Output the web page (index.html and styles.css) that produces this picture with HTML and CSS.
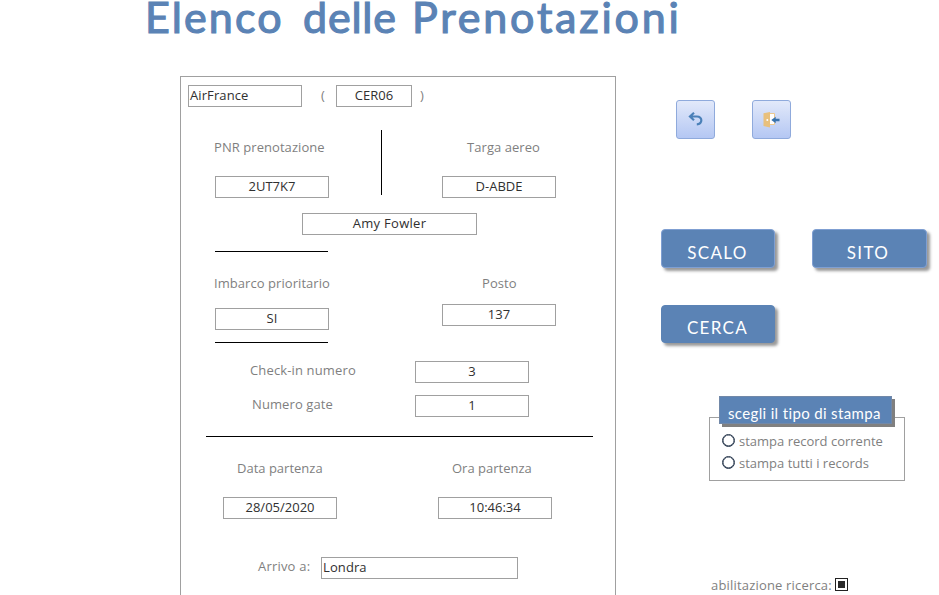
FILE: index.html
```html
<!DOCTYPE html>
<html lang="it">
<head>
<meta charset="utf-8">
<title>Elenco delle Prenotazioni</title>
<link rel="stylesheet" href="styles.css">
</head>
<body>
<h1 class="title"><span class="w1">Elenco</span> <span class="w2">delle</span> <span class="w3">Prenotazioni</span></h1>
<div class="layout">
<main class="card">
  <div class="row airline">
    <div class="field left">AirFrance</div><span class="paren">(</span><div class="field code">CER06</div><span class="paren close">)</span>
  </div>
  <div class="row booking">
    <div class="col pnr"><span class="label">PNR prenotazione</span><div class="field">2UT7K7</div></div>
    <div class="divider"></div>
    <div class="col plane"><span class="label">Targa aereo</span><div class="field">D-ABDE</div></div>
  </div>
  <div class="field passenger">Amy Fowler</div>
  <div class="row boarding">
    <div class="col priority"><span class="label">Imbarco prioritario</span><div class="field">SI</div></div>
    <div class="col seat"><span class="label">Posto</span><div class="field">137</div></div>
  </div>
  <div class="row checkin"><span class="label">Check-in numero</span><div class="field">3</div></div>
  <div class="row gate"><span class="label">Numero gate</span><div class="field">1</div></div>
  <div class="rule"></div>
  <div class="row departure">
    <div class="col date"><span class="label">Data partenza</span><div class="field">28/05/2020</div></div>
    <div class="col time"><span class="label">Ora partenza</span><div class="field">10:46:34</div></div>
  </div>
  <div class="row arrival"><span class="label">Arrivo a:</span><div class="field left">Londra</div></div>
</main>
<aside class="side">
  <div class="tools">
    <button class="tool" aria-label="Annulla"><svg width="16" height="16" viewBox="0 0 16 16"><path d="M6 .8 2 4.500 6 8.200M2.500 4.500h6.500c5.800 0 5.800 7.500-.2 7.800" fill="none" stroke="#4a80b8" stroke-width="2.2"/></svg></button>
    <button class="tool" aria-label="Esci"><svg width="18" height="16" viewBox="0 0 18 16"><path d="M6 1.500h5.500v11H6z" fill="#fff" stroke="#ecc88f"/><path d="M.5 1.300 7 0v15.500l-6.500-1.500z" fill="#e8c07d"/><circle cx="4.300" cy="8" r="1" fill="#fff"/><path d="M16.500 6.800h-3.800V4.800L8.300 8l4.400 3.200V9.200h3.800z" fill="#3973ac"/></svg></button>
  </div>
  <div class="actions">
    <button class="action">SCALO</button>
    <button class="action site">SITO</button>
    <button class="action search">CERCA</button>
  </div>
  <div class="print">
    <div class="legend">scegli il tipo di stampa</div>
    <div class="option"><i class="radio"></i><span>stampa record corrente</span></div>
    <div class="option"><i class="radio"></i><span>stampa tutti i records</span></div>
  </div>
  <div class="enable"><span>abilitazione ricerca:</span><i class="check"></i></div>
</aside>
</div>
</body>
</html>
```
FILE: styles.css
```css
* { box-sizing: border-box; }
html, body { height: 100%; }
body { margin: 0; overflow: hidden; background: #fff; font: 13px/20px "Open Sans", "Noto Sans", sans-serif; color: #7f7f7f; }
.title { margin: 0; height: 76px; padding-left: 145px; display: flex; font: 400 43px/34px Lato, sans-serif; color: #5b83b5; -webkit-text-stroke: 1.2px #5b83b5; white-space: nowrap; }
.w1 { width: 158px; letter-spacing: 2.1px; }
.w2 { width: 109px; letter-spacing: .8px; }
.w3 { letter-spacing: 2.8px; }
.layout { display: flex; padding-left: 180px; }
.card { width: 436px; height: 519px; flex: none; border: 1px solid #a0a0a0; border-bottom: 0; }
.row { display: flex; }
.col { display: flex; flex-direction: column; }
.label { white-space: nowrap; letter-spacing: .06px; }
.field { flex: none; width: 114px; height: 22px; border: 1px solid #a0a0a0; line-height: 19px; text-align: center; color: #303030; }
.field.left { text-align: left; padding-left: 1px; letter-spacing: .1px; }

.airline { margin: 8px 0 0 7px; }
.paren { width: 34px; padding-left: 19px; }
.field.code { width: 76px; }
.paren.close { padding-left: 8px; }

.booking { margin-top: 23px; padding-left: 34px; height: 68px; }
.booking .col { padding-top: 7px; gap: 19px; width: 114px; }
.pnr .label, .priority .label { margin-left: -1px; }
.divider { width: 1px; height: 65px; background: #000; margin: 0 60px 0 52px; }
.plane .label { padding-left: 25px; }
.passenger { width: 175px; margin: 15px 0 0 121px; letter-spacing: .3px; }
.boarding { margin: 16px 0 0 34px; gap: 114px; height: 92px; }
.priority { width: 113px; border: solid #000; border-width: 1px 0; padding-top: 21px; gap: 15px; }
.seat { padding-top: 22px; gap: 11px; }
.seat .label { padding-left: 40px; }
.checkin { margin: 18px 0 0 69px; }
.checkin .label { width: 165px; letter-spacing: .14px; }
.gate { margin: 12px 0 0 71px; }
.gate .label { width: 163px; letter-spacing: .1px; }
.checkin .label, .gate .label { line-height: 18px; }
.rule { height: 1px; width: 387px; margin: 19px 0 0 25px; background: #000; }
.departure { margin: 21px 0 0 42px; gap: 101px; }
.departure .col { gap: 19px; }
.departure .label { padding-left: 14px; letter-spacing: 0; }
.arrival { margin: 38px 0 0 77px; }
.arrival .label { width: 63px; line-height: 18px; letter-spacing: .2px; }
.arrival .field { width: 197px; }

.side { margin-left: 45px; width: 268px; padding-top: 24px; flex: none; }
.tools { display: flex; gap: 37px; padding-left: 15px; }
.tool { width: 39px; height: 39px; padding: 0; border: 1px solid #8faadc; border-radius: 3px; background: linear-gradient(#e2e9fa, #b4c7f3); display: flex; align-items: center; justify-content: center; }
.actions { margin-top: 90px; display: grid; grid-template-columns: 114px 115px; gap: 36px 37px; }
.action { height: 39px; border: 1px solid #7f9fd2; border-radius: 4px; background: #5b83b5; color: #fff; font: 400 17px/20px Lato, sans-serif; padding: 8px 1px 0 0; box-shadow: 3px 3px 3px #999; letter-spacing: 1.3px; }
.search { border-color: #5b83b5; margin-top: 1px; height: 38px; }
.site { padding-right: 3px; }
.print { position: relative; margin: 74px 0 0 48px; width: 196px; height: 64px; border: 1px solid #a0a0a0; padding: 12px 0 0 12px; }
.legend { position: absolute; left: 9px; top: -22px; width: 173px; height: 28px; background: #5b83b5; border: 1px solid #7188a8; box-shadow: 3px 3px 0 #808080; color: #fff; font: 400 15px/33px Lato, sans-serif; padding-left: 8px; white-space: nowrap; letter-spacing: .35px; }
.option { display: flex; align-items: center; height: 22px; gap: 4px; white-space: nowrap; }
.radio { width: 13px; height: 13px; border: 1.5px solid #24344a; border-radius: 50%; box-shadow: inset 0 0 0 .5px #24344a; margin-top: -1px; }
.enable { display: flex; align-items: center; gap: 3px; margin: 94px 0 0 50px; white-space: nowrap; letter-spacing: .18px; }
.check { width: 13px; height: 13px; border: 1px solid #222; background: #2b2b2b; box-shadow: inset 0 0 0 2px #fff; margin-top: -2px; }
```
